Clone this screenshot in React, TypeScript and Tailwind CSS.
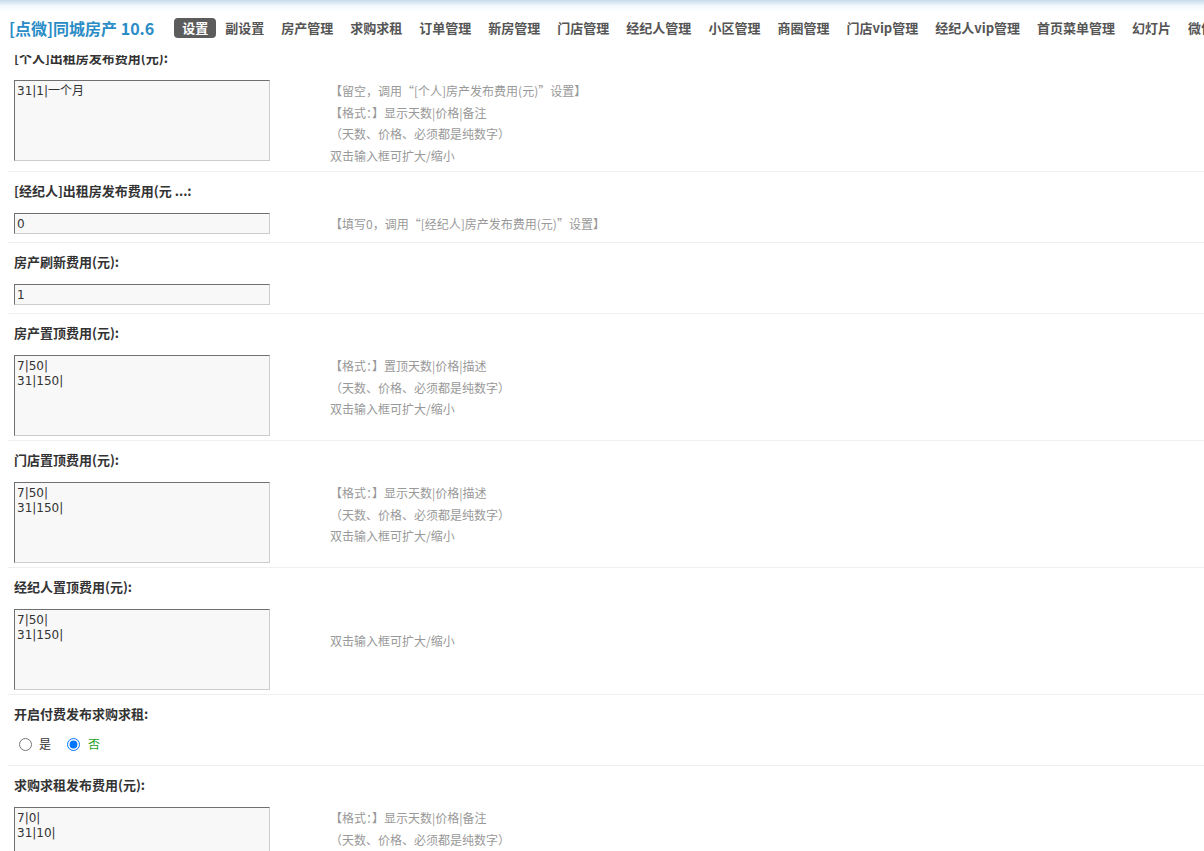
import React from "react";

const navItems = [
  "设置",
  "副设置",
  "房产管理",
  "求购求租",
  "订单管理",
  "新房管理",
  "门店管理",
  "经纪人管理",
  "小区管理",
  "商圈管理",
  "门店vip管理",
  "经纪人vip管理",
  "首页菜单管理",
  "幻灯片",
  "微信设置",
];

const fmtShow = "【格式：】显示天数|价格|备注";
const pureNum = "（天数、价格、必须都是纯数字）";
const dblClick = "双击输入框可扩大/缩小";

type Row =
  | {
      kind: "textarea";
      label: string;
      value: string;
      help: string[];
      helpTop?: string;
      bottom?: string;
    }
  | { kind: "input"; label: string; value: string; help: string[] }
  | { kind: "radio"; label: string };

const rows: Row[] = [
  {
    kind: "textarea",
    label: "[个人]出租房发布费用(元):",
    value: "31|1|一个月",
    help: ["【留空，调用“[个人]房产发布费用(元)”设置】", fmtShow, pureNum, dblClick],
    bottom: "mb-[10px]",
  },
  {
    kind: "input",
    label: "[经纪人]出租房发布费用(元 ...:",
    value: "0",
    help: ["【填写0，调用“[经纪人]房产发布费用(元)”设置】"],
  },
  { kind: "input", label: "房产刷新费用(元):", value: "1", help: [] },
  {
    kind: "textarea",
    label: "房产置顶费用(元):",
    value: "7|50|\n31|150|",
    help: ["【格式：】置顶天数|价格|描述", pureNum, dblClick],
  },
  {
    kind: "textarea",
    label: "门店置顶费用(元):",
    value: "7|50|\n31|150|",
    help: ["【格式：】显示天数|价格|描述", pureNum, dblClick],
  },
  {
    kind: "textarea",
    label: "经纪人置顶费用(元):",
    value: "7|50|\n31|150|",
    help: [dblClick],
    helpTop: "pt-[21px]",
  },
  { kind: "radio", label: "开启付费发布求购求租:" },
  {
    kind: "textarea",
    label: "求购求租发布费用(元):",
    value: "7|0|\n31|10|",
    help: [fmtShow, pureNum, dblClick],
  },
];

const cjk = "font-['Noto_Sans_CJK_SC',sans-serif]";
const field =
  "block w-[256px] border border-t-[#707070] border-l-[#707070] border-b-[#cccccc] border-r-[#cccccc] bg-[#f8f8f8] px-[2px] text-[12px] text-[#333] outline-none font-['DejaVu_Sans','Noto_Sans_CJK_SC',sans-serif]";

function Help({ lines, top }: { lines: string[]; top?: string }) {
  return (
    <div className={`${top ?? ""} text-[12px] leading-[21.5px] text-[#999] ${cjk}`}>
      {lines.map((l, i) => (
        <p key={i} className="whitespace-nowrap">
          {l}
        </p>
      ))}
    </div>
  );
}

function SettingRow({ row }: { row: Row }) {
  return (
    <div className="ml-[8px] border-t border-[#efefef] pl-[6px] pt-[9px]">
      <p className={`h-[20px] text-[13px] font-bold leading-[20px] text-[#333] ${cjk}`}>
        {row.label}
      </p>
      {row.kind === "textarea" && (
        <div className={`mt-[12px] ${row.bottom ?? "mb-[4px]"} flex h-[81px] items-start`}>
          <div className="w-[316px] shrink-0">
            <textarea
              readOnly
              value={row.value}
              className={`${field} h-[81px] resize-none pt-[3px] leading-[15px]`}
            />
          </div>
          <Help lines={row.help} top={row.helpTop} />
        </div>
      )}
      {row.kind === "input" && (
        <div className="mt-[12px] mb-[8px] flex h-[21px] items-start">
          <div className="w-[316px] shrink-0">
            <input readOnly value={row.value} className={`${field} h-[21px] leading-[19px]`} />
          </div>
          <Help lines={row.help} />
        </div>
      )}
      {row.kind === "radio" && (
        <div className={`mt-[12px] mb-[13px] flex h-[16px] items-center text-[12px] ${cjk}`}>
          <input type="radio" name="paid" readOnly className="m-0 ml-[5px] h-[13px] w-[13px]" />
          <span className="ml-[7px] text-[#333]">是</span>
          <input
            type="radio"
            name="paid"
            readOnly
            checked
            className="m-0 ml-[16px] h-[13px] w-[13px]"
          />
          <span className="ml-[8px] text-[#1ea01e]">否</span>
        </div>
      )}
    </div>
  );
}

export default function App() {
  return (
    <div className="flex h-[851px] w-[1204px] flex-col overflow-hidden bg-white">
      <div className="flex h-[55px] shrink-0 items-center bg-[linear-gradient(#c4dbec_0px,#f4f9fc_6px,#ffffff_12px)] pb-[3px] pl-[9px] pt-[4px]">
        <span
          className={`whitespace-nowrap text-[16px] font-bold leading-[20px] text-[#2a8cc6] ${cjk}`}
        >
          [点微]同城房产 10.6
        </span>
        <div className="ml-[20px] flex gap-[1px]">
          {navItems.map((item, index) => (
            <span
              key={index}
              className={`whitespace-nowrap rounded-[4px] px-[8px] text-[13px] font-bold leading-[20px] ${cjk} ${
                index === 0 ? "bg-[#5c5c5c] text-white" : "text-[#555]"
              }`}
            >
              {item}
            </span>
          ))}
        </div>
      </div>
      <div className="flex-1 overflow-hidden">
        <div className="-mt-[17px]">
          {rows.map((row, i) => (
            <SettingRow key={i} row={row} />
          ))}
        </div>
      </div>
    </div>
  );
}
